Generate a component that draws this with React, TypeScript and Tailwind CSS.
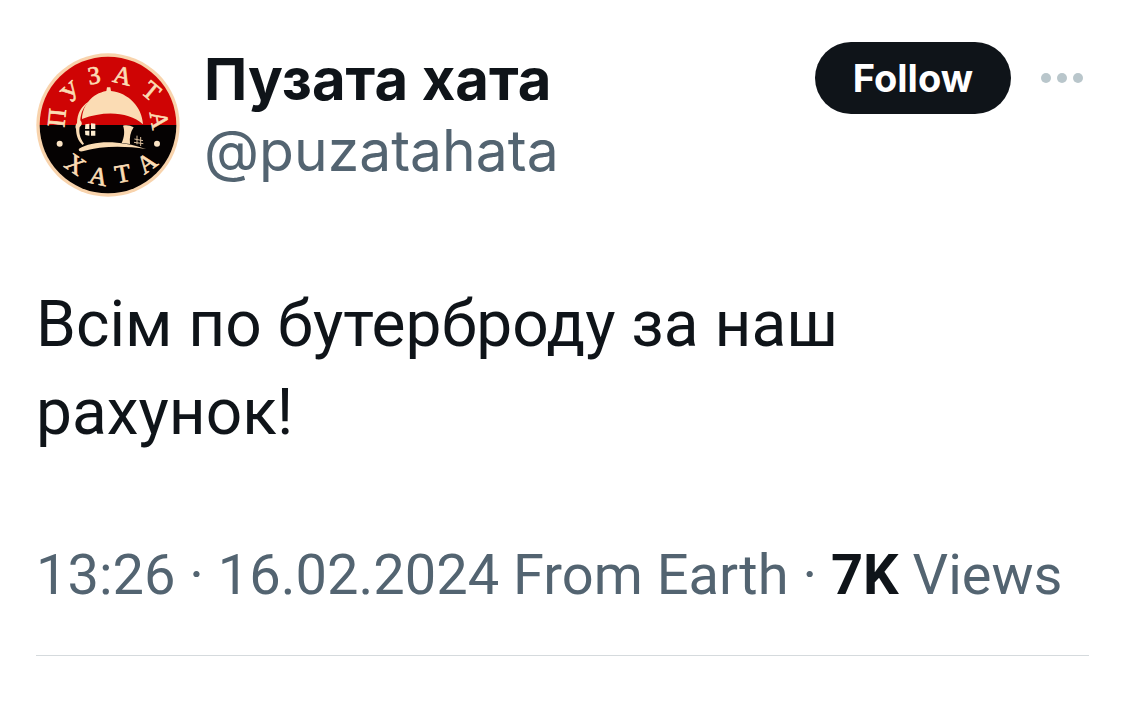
interface RingLetter {
  char: string
  x: number
  y: number
  angle: number
}

const RING_LETTERS: RingLetter[] = [
  { char: 'П', x: 83, y: 218, angle: -84 },
  { char: 'У', x: 125, y: 141, angle: -42 },
  { char: 'З', x: 194, y: 91, angle: -10 },
  { char: 'А', x: 280, y: 92, angle: 14 },
  { char: 'Т', x: 366, y: 138, angle: 40 },
  { char: 'А', x: 390, y: 225, angle: 80 },
  { char: 'Х', x: 138, y: 358, angle: 34 },
  { char: 'А', x: 207, y: 394, angle: 12 },
  { char: 'Т', x: 280, y: 386, angle: -10 },
  { char: 'А', x: 352, y: 354, angle: -36 },
]

function Avatar() {
  return (
    <svg viewBox="20 24 432 432" className="mt-[13px] size-36 shrink-0" role="img" aria-label="Пузата хата">
      <circle cx="236" cy="240" r="215" fill="#f8d3ac" />
      <path d="M31 240a205 205 0 0 1 410 0z" fill="#cf0404" />
      <path d="M31 240a205 205 0 0 0 410 0z" fill="#050202" />
      <g fill="#fbdcb4" fontFamily='"Liberation Serif", serif' fontSize="76" textAnchor="middle">
        {RING_LETTERS.map((l, i) => (
          <text key={i} transform={`translate(${l.x} ${l.y}) rotate(${l.angle})`} y="25" stroke="#fbdcb4" strokeWidth="2">
            {l.char}
          </text>
        ))}
      </g>
      <circle cx="91" cy="296" r="9" fill="#fbe3c4" />
      <circle cx="383" cy="296" r="9" fill="#fbe3c4" />
      {/* roof */}
      <path
        d="M158 222C160 180 188 146 231 138L233 127H243L245 138C298 144 338 186 341 238C300 200 225 196 158 222Z"
        fill="#fbdcb4"
      />
      {/* wall outline */}
      <path
        d="M178 170C155 184 144 204 143 234C138 240 137 246 140 252C141 272 145 287 160 300L164 296C151 278 148 262 151 246C158 240 160 234 153 226C154 206 160 190 178 170Z"
        fill="#fbdcb4"
      />
      {/* window */}
      <path d="M168 238L180 236V252H167ZM185 235L198 236V252H185ZM167 257H180V272L168 270ZM185 257H198V272H185Z" fill="#fdebcf" />
      {/* door */}
      <path d="M281 242C292 239 303 241 313 247C303 262 300 278 302 297L277 294C285 276 287 258 281 242Z" fill="#fbdcb4" />
      {/* ground */}
      <path d="M149 311C190 286 270 284 350 312C290 303 220 301 160 319C151 321 146 316 149 311Z" fill="#fbdcb4" />
      {/* fence */}
      <path d="M323 272V298M334 276V303M315 282L341 287M314 292L342 296" stroke="#d9bd9b" strokeWidth="3" fill="none" />
    </svg>
  )
}

function MoreIcon() {
  return (
    <svg viewBox="0 0 42 10" className="w-[42px]" fill="#b9c6cb" aria-hidden="true">
      <circle cx="5" cy="5" r="5" />
      <circle cx="21" cy="5" r="5" />
      <circle cx="37" cy="5" r="5" />
    </svg>
  )
}

export default function App() {
  return (
    <article className="bg-white px-9 pt-10 font-['Inter',sans-serif] text-[#0f1419]">
      <header className="flex items-start">
        <div className="flex min-w-0 flex-1 items-start gap-6">
          <Avatar />
          <div className="flex flex-col pt-[3px]">
            <h1 className="text-[58px] leading-[72px] font-bold">Пузата хата</h1>
            <a href="#profile" className="text-[57px] leading-[72px] text-[#536471]">
              @puzatahata
            </a>
          </div>
        </div>
        <div className="flex shrink-0 items-center gap-[30px] pt-0.5 pr-1.5">
          <button type="button" className="h-[72px] rounded-full bg-[#0f1419] px-[38px] text-[38px] font-bold text-white">
            Follow
          </button>
          <button type="button" aria-label="More">
            <MoreIcon />
          </button>
        </div>
      </header>

      <p className="mt-[84px] max-w-[900px] font-['Roboto',sans-serif] text-[64px] leading-[88px]">
        Всім по бутерброду за наш рахунок!
      </p>

      <div className="mt-[82px] border-b border-[#d5dadd] pb-11 font-['Roboto',sans-serif] text-[56px] leading-[72px] whitespace-nowrap text-[#536471]">
        <time dateTime="2024-02-16T13:26">13:26 · 16.02.2024</time> From Earth ·{' '}
        <strong className="font-bold text-[#0f1419]">7K</strong> Views
      </div>
    </article>
  )
}
